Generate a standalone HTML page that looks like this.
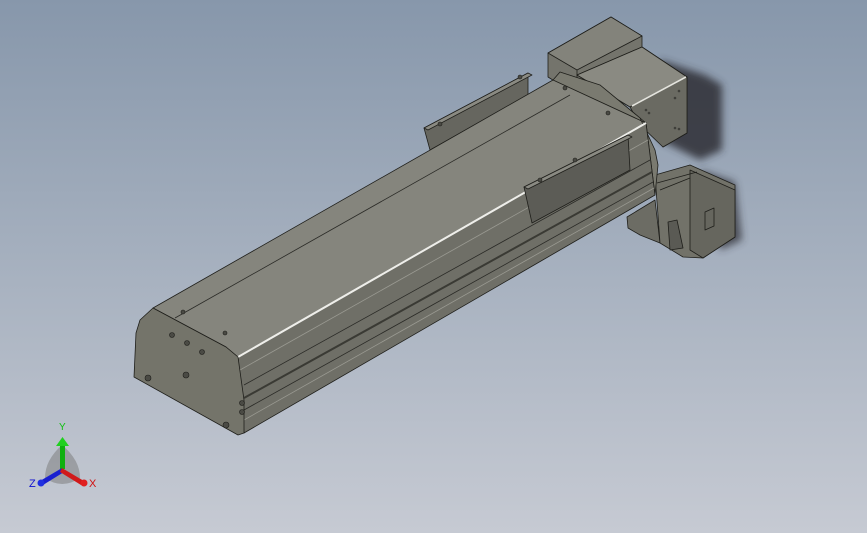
<!DOCTYPE html>
<html><head><style>
html,body{margin:0;padding:0;width:867px;height:533px;overflow:hidden}
body{background:linear-gradient(180deg,#8797ab 0%,#a3aebd 45%,#c6cad3 100%);font-family:"Liberation Sans",sans-serif}
svg{position:absolute;left:0;top:0}
</style></head><body>
<svg width="867" height="533" viewBox="0 0 867 533" stroke="#1e1e1a" stroke-width="0.8" stroke-linejoin="round">
<defs><filter id="b" x="-50%" y="-50%" width="200%" height="200%"><feGaussianBlur stdDeviation="4"/></filter></defs>
<!-- shadows -->
<polygon points="660,60 705,75 722,85 722,150 700,160 660,140" fill="#2e2e36" stroke="none" opacity="0.85" filter="url(#b)"/>
<polygon points="700,170 735,182 742,240 720,250" fill="#2e2e36" stroke="none" opacity="0.75" filter="url(#b)"/>
<!-- upper motor back box -->
<polygon points="548,53 611,17 642,36 642,60 577,95 548,77" fill="#74746c"/>
<polygon points="548,53 611,17 642,36 577,70" fill="#83837b"/>
<line x1="577" y1="70" x2="577" y2="95"/>
<!-- upper motor front box -->
<polygon points="577,75 642,47 687,77 687,133 663,147 630,107" fill="#6f6f67"/>
<polygon points="577,75 642,47 687,77 630,107" fill="#8a8a82"/>
<polygon points="630,107 687,77 687,133 663,147 640,125" fill="#6a6a62"/>
<line x1="632" y1="106" x2="686" y2="77" stroke="#e4e4de" stroke-width="1.6"/>
<g fill="#3e3e3a" stroke="none"><circle cx="679" cy="91" r="1.3"/><circle cx="675" cy="98" r="1.3"/><circle cx="675" cy="128" r="1.3"/><circle cx="679" cy="129" r="1.3"/><circle cx="646" cy="110" r="1.3"/><circle cx="649" cy="113" r="1.3"/></g>
<!-- back bracket -->
<polygon points="424,128 528,73 528,95 430,150" fill="#66665f"/>
<polygon points="424,128 528,73 532,75 428,130" fill="#8a8a82"/>
<!-- lower motor -->
<polygon points="627,217 655,200 660,243 640,235 628,228" fill="#6c6c64"/>
<polygon points="655,175 690,165 735,185 735,237 703,258 683,257 660,243" fill="#727269"/>
<polygon points="690,170 735,190 735,237 703,258 690,250" fill="#66665e"/>
<polygon points="705,212 714,208 714,226 705,230" fill="none"/>
<polygon points="668,222 677,220 683,248 670,250" fill="#5a5a54"/>
<line x1="657" y1="183" x2="697" y2="172"/>
<line x1="660" y1="190" x2="690" y2="178"/>
<!-- top face -->
<polygon points="153,308 553,80 600,85 646,123 238,357 226,347" fill="#85857d"/>
<line x1="175" y1="318" x2="570" y2="95" stroke="#2a2a26"/>
<!-- far end cap -->
<polygon points="553,80 560,72 600,85 640,118 655,150 658,165 655,195 646,123" fill="#7a7a70"/>
<!-- side face -->
<polygon points="238,357 646,123 655,195 244,433" fill="#6f6f67"/>
<line x1="238" y1="357" x2="646" y2="123" stroke="#eeeeea" stroke-width="2"/>
<line x1="244" y1="385" x2="650" y2="160" stroke="#2a2a26"/>
<line x1="244" y1="398" x2="652" y2="172" stroke="#3a3a34" stroke-width="2"/>
<line x1="244" y1="410" x2="653" y2="182" stroke="#2a2a26"/>
<line x1="244" y1="420" x2="654" y2="188" stroke="#9a9a92"/>
<line x1="240" y1="370" x2="648" y2="140" stroke="#9a9a92"/>
<!-- carriage -->
<polygon points="524,187 628,135 630,170 532,223" fill="#5c5c56"/>
<polygon points="524,187 628,135 632,137 528,189" fill="#8a8a82"/>
<!-- front end cap -->
<polygon points="153,308 226,347 238,357 244,400 244,433 238,435 134,377 136,333 140,320" fill="#74746a"/>
<g fill="#4a4a44" stroke="#1e1e1a" stroke-width="0.6">
<circle cx="172" cy="335" r="2.5"/><circle cx="187" cy="343" r="2.5"/><circle cx="202" cy="352" r="2.5"/>
<circle cx="186" cy="375" r="3"/><circle cx="148" cy="378" r="3"/><circle cx="226" cy="425" r="3"/>
<circle cx="242" cy="403" r="2.5"/><circle cx="242" cy="412" r="2.5"/>
<circle cx="183" cy="312" r="2"/><circle cx="225" cy="333" r="2"/><circle cx="565" cy="88" r="2"/><circle cx="608" cy="113" r="2"/>
<circle cx="575" cy="160" r="2"/><circle cx="540" cy="180" r="2"/><circle cx="520" cy="77" r="2"/><circle cx="440" cy="124" r="2"/>
</g>
<!-- axis triad -->
<g stroke="none">
<path d="M62,445 Q45,460 45,478 Q62,490 80,478 Q80,460 62,445Z" fill="#777" opacity="0.5"/>
<rect x="60" y="445" width="5" height="24" fill="#10b010"/>
<polygon points="56,446 69,446 62.5,437" fill="#20d020"/>
<polygon points="62,468 40,481 43,485 64,472" fill="#1a20d0"/>
<polygon points="62,468 84,481 81,485 60,472" fill="#d01a1a"/>
<circle cx="41" cy="483" r="3.5" fill="#2030e0"/><circle cx="84" cy="483" r="3.5" fill="#e02020"/>
</g>
<text x="59" y="430" font-size="10" fill="#10c010" stroke="none">Y</text>
<text x="29" y="487" font-size="11" fill="#1010d0" stroke="none">Z</text>
<text x="89" y="487" font-size="11" fill="#d01010" stroke="none">X</text>
</svg>
</body></html>
